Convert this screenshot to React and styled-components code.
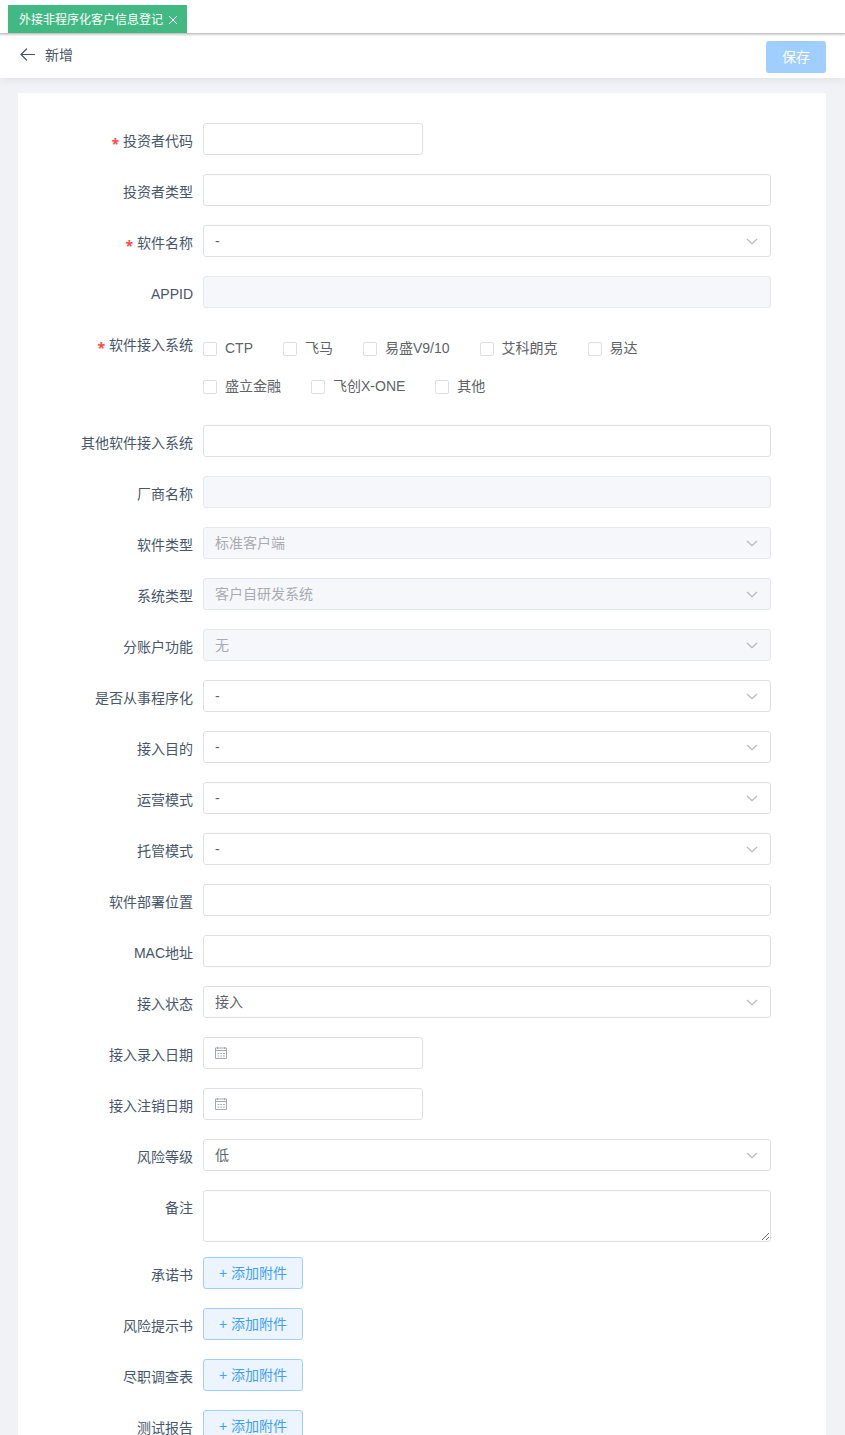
import styled, { createGlobalStyle } from "styled-components";

const GlobalStyle = createGlobalStyle`
* {
    box-sizing: border-box;
}

body {
    margin: 0;
    background-color: #f0f2f5;
    color: #475669;
    font-family: "Liberation Sans", "Noto Sans CJK SC", sans-serif;
    font-size: 14px;
}

button, input, select, textarea {
    margin: 0;
    font-family: inherit;
    font-size: inherit;
}
`

const Page = styled.div`
    display: flex;
    flex-direction: column;
    height: 100vh;
`

/* Open pages */

const TabBar = styled.nav`
    display: flex;
    flex: none;
    padding: 5px 8px 0;
    background-color: #fff;
    border-bottom: 1px solid #c4c4c4;
    box-shadow: 0 1px 2px rgba(0, 0, 0, 0.2);
    z-index: 2;
`

const Tab = styled.div`
    display: flex;
    align-items: center;
    gap: 4px;
    height: 28px;
    padding: 0 8px 2px 11px;
    background-color: #42b983;
    color: #fff;
    font-size: 12px;

    a {
        color: inherit;
        text-decoration: none;
    }
`

const IconButton = styled.button`
    display: flex;
    padding: 0;
    border: none;
    background: none;
    color: inherit;
    cursor: pointer;
`

const CloseButton = styled(IconButton)`
    padding-top: 4px;
`

const Header = styled.header`
    display: flex;
    flex: none;
    align-items: center;
    gap: 9px;
    height: 44px;
    padding: 2px 19px 0;
    background-color: #fff;
    box-shadow: 0 2px 10px rgba(0, 0, 0, 0.07);
    z-index: 1;
`

const Title = styled.h1`
    flex: 1;
    margin: 0;
    padding-bottom: 6px;
    font-size: 14px;
    font-weight: normal;
`

const BackButton = styled(IconButton)`
    padding-bottom: 5px;
`

const SaveButton = styled.button`
    height: 32px;
    padding: 0 16px 2px;
    border: none;
    border-radius: 3px;
    background-color: #a0cfff;
    color: #fff;
`

const Content = styled.main`
    flex: 1;
    min-height: 0;
    padding: 15px 19px 0 18px;
    overflow-y: auto;
    scrollbar-width: none;
`

const Card = styled.form`
    padding: 30px 55px;
    background-color: #fff;
`

/* Form rows */

const Row = styled.div`
    display: grid;
    grid-template-columns: 120px minmax(0, 1fr);
    column-gap: 10px;
    align-items: start;
    margin-bottom: ${props => props.$tight ? "15px" : "19px"};
`

const Label = styled.label`
    height: 32px;
    line-height: 36px;
    text-align: right;
    white-space: nowrap;
`

const Star = styled.span`
    margin-right: 4px;
    color: #ff4949;
    font-family: "Noto Sans", sans-serif;
    font-size: 14px;
    font-weight: bold;
    line-height: 1;
    vertical-align: -3px;
`

const Field = styled.div`
    position: relative;
    width: ${props => props.$short ? "220px" : "100%"};
    max-width: 100%;
    color: #b4b8bf;
`

const Input = styled.input`
    display: block;
    width: 100%;
    height: 32px;
    padding: 0 11px;
    padding-left: ${props => props.$icon ? "30px" : "11px"};
    border: 1px solid #dcdfe6;
    border-radius: 3px;
    background-color: #fff;
    color: #606266;
    outline: none;

    &:focus {
        border-color: #409eff;
    }

    &:disabled {
        border-color: #e4e7ed;
        background-color: #f5f7fa;
        color: #a8abb2;
        opacity: 1;
    }
`

const Select = styled(Input).attrs({ as: "select" })`
    padding: 0 30px 0 11px;
    appearance: none;
`

const TextArea = styled(Input).attrs({ as: "textarea" })`
    height: 52px;
    padding: 5px 11px;
    resize: vertical;
`

const Suffix = styled.span`
    position: absolute;
    top: 0;
    right: 13px;
    display: flex;
    align-items: center;
    height: 100%;
    pointer-events: none;
`

const Prefix = styled(Suffix)`
    right: auto;
    left: 11px;
    color: #a3a7ae;
`

const Checks = styled.div`
    display: flex;
    flex-wrap: wrap;
    padding-top: 3px;
`

const Check = styled.label`
    display: flex;
    align-items: center;
    gap: 8px;
    height: 38px;
    margin-right: 30px;
    color: #606266;

    input {
        appearance: none;
        width: 14px;
        height: 14px;
        border: 1px solid #dcdfe6;
        border-radius: 2px;
        background-color: #fff;
    }

    input:checked {
        border-color: #409eff;
        background-color: #409eff;
    }

    span {
        line-height: 20px;
        padding-bottom: 2px;
    }
`

const AddButton = styled.button`
    height: 32px;
    padding: 0 15px 2px;
    border: 1px solid #a0cfff;
    border-radius: 3px;
    background-color: #ecf5ff;
    color: #409eff;
    cursor: pointer;
`

const ArrowDown = () => (
    <svg width="12" height="12" viewBox="0 0 12 12" fill="none" stroke="currentColor" strokeWidth="1.2">
        <path d="M1 4 6 8.7 11 4" />
    </svg>
)

const ArrowLeft = () => (
    <svg width="17" height="16" viewBox="0 0 17 16" fill="none" stroke="currentColor" strokeWidth="1.2" strokeLinecap="round">
        <path d="M2 7.5H15.5M7.5 2 2 7.5 7.5 13" />
    </svg>
)

const Close = () => (
    <svg width="12" height="12" viewBox="0 0 12 12" fill="none" stroke="currentColor" strokeWidth="1">
        <path d="M2 2 10 10M10 2 2 10" />
    </svg>
)

const Calendar = () => (
    <svg width="14" height="14" viewBox="0 0 14 14" fill="none" stroke="currentColor">
        <path d="M1.5 2H12.5V12.5H1.5ZM1.5 4.5H12.5M3.5 1V3M10.5 1V3" />
        <path d="M3.5 7.5H11M3.5 10H11" strokeDasharray="1.8 1" />
    </svg>
)

const fields = [
    { id: "code", label: "投资者代码", type: "text", required: true, short: true },
    { id: "kind", label: "投资者类型", type: "text" },
    { id: "software", label: "软件名称", type: "select", value: "-", required: true },
    { id: "appid", label: "APPID", type: "text", disabled: true },
    {
        id: "systems",
        label: "软件接入系统",
        type: "checks",
        required: true,
        options: ["CTP", "飞马", "易盛V9/10", "艾科朗克", "易达", "盛立金融", "飞创X-ONE", "其他"]
    },
    { id: "otherSystem", label: "其他软件接入系统", type: "text" },
    { id: "vendor", label: "厂商名称", type: "text", disabled: true },
    { id: "softwareType", label: "软件类型", type: "select", value: "标准客户端", disabled: true },
    { id: "systemType", label: "系统类型", type: "select", value: "客户自研发系统", disabled: true },
    { id: "subAccount", label: "分账户功能", type: "select", value: "无", disabled: true },
    { id: "program", label: "是否从事程序化", type: "select", value: "-" },
    { id: "purpose", label: "接入目的", type: "select", value: "-" },
    { id: "operation", label: "运营模式", type: "select", value: "-" },
    { id: "hosting", label: "托管模式", type: "select", value: "-" },
    { id: "location", label: "软件部署位置", type: "text" },
    { id: "mac", label: "MAC地址", type: "text" },
    { id: "status", label: "接入状态", type: "select", value: "接入" },
    { id: "entryDate", label: "接入录入日期", type: "date", short: true },
    { id: "cancelDate", label: "接入注销日期", type: "date", short: true },
    { id: "risk", label: "风险等级", type: "select", value: "低" },
    { id: "remark", label: "备注", type: "textarea" },
    { id: "promise", label: "承诺书", type: "file" },
    { id: "riskNotice", label: "风险提示书", type: "file" },
    { id: "survey", label: "尽职调查表", type: "file" },
    { id: "report", label: "测试报告", type: "file" }
]

const Control = ({ field }) => {
    const { id, type, value, disabled, options } = field

    if (type === "select") {
        return (
            <>
                <Select id={id} disabled={disabled}>
                    <option>{value}</option>
                </Select>
                <Suffix><ArrowDown /></Suffix>
            </>
        )
    }
    if (type === "date") {
        return (
            <>
                <Input id={id} type="text" $icon />
                <Prefix><Calendar /></Prefix>
            </>
        )
    }
    if (type === "checks") {
        return (
            <Checks role="group" aria-labelledby={`${id}-label`}>
                {options.map(option => (
                    <Check key={option}>
                        <input type="checkbox" name={id} value={option} />
                        <span>{option}</span>
                    </Check>
                ))}
            </Checks>
        )
    }
    if (type === "textarea") {
        return <TextArea id={id} />
    }
    if (type === "file") {
        return <AddButton id={id} type="button">+ 添加附件</AddButton>
    }
    return <Input id={id} type="text" disabled={disabled} />
}

const FormRow = ({ field }) => {
    const group = field.type === "checks"
    return (
        <Row $tight={field.type === "textarea"}>
            <Label
                as={group ? "span" : "label"}
                id={`${field.id}-label`}
                htmlFor={group ? undefined : field.id}
            >
                {field.required && <Star>*</Star>}
                {field.label}
            </Label>
            <Field $short={field.short}>
                <Control field={field} />
            </Field>
        </Row>
    )
}

const App = () => {
    return (
        <Page>
            <GlobalStyle />
            <TabBar>
                <Tab>
                    <a href="#register">外接非程序化客户信息登记</a>
                    <CloseButton type="button" aria-label="关闭"><Close /></CloseButton>
                </Tab>
            </TabBar>
            <Header>
                <BackButton type="button" aria-label="返回"><ArrowLeft /></BackButton>
                <Title>新增</Title>
                <SaveButton type="submit" form="customer" disabled>保存</SaveButton>
            </Header>
            <Content>
                <Card id="customer">
                    {fields.map(field => <FormRow key={field.id} field={field} />)}
                </Card>
            </Content>
        </Page>
    );
}
export default App;
